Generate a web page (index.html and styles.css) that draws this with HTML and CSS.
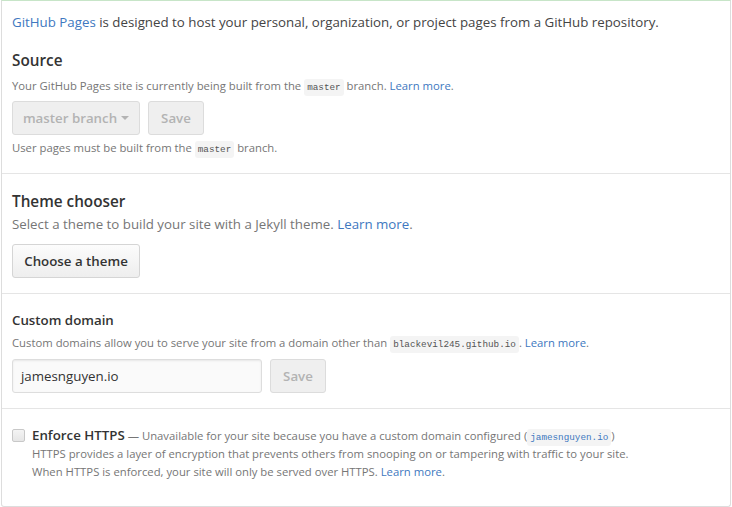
FILE: index.html
```html
<!DOCTYPE html>
<html>
<head>
<meta charset="utf-8">
<link rel="stylesheet" href="styles.css">
</head>
<body>
<div class="box">
  <section class="sec sec-source">
    <p class="intro"><a href="#">GitHub Pages</a> is designed to host your personal, organization, or project pages from a GitHub repository.</p>
    <h3 class="title">Source</h3>
    <p class="note">Your GitHub Pages site is currently being built from the <code>master</code> branch. <a href="#">Learn more</a>.</p>
    <div class="row">
      <button class="btn btn-dis btn-branch">master branch <span class="caret"></span></button>
      <button class="btn btn-dis btn-save">Save</button>
    </div>
    <p class="note note-after">User pages must be built from the <code>master</code> branch.</p>
  </section>
  <section class="sec sec-theme">
    <h3 class="title">Theme chooser</h3>
    <p class="lead">Select a theme to build your site with a Jekyll theme. <a href="#">Learn more</a>.</p>
    <button class="btn btn-theme">Choose a theme</button>
  </section>
  <section class="sec sec-domain">
    <h4 class="subtitle">Custom domain</h4>
    <p class="note">Custom domains allow you to serve your site from a domain other than <code>blackevil245.github.io</code>. <a href="#">Learn more</a>.</p>
    <div class="row row-domain">
      <div class="input">jamesnguyen.io</div>
      <button class="btn btn-dis btn-save">Save</button>
    </div>
  </section>
  <section class="sec sec-https">
    <div class="check-row">
      <span class="checkbox"></span>
      <div class="check-body">
        <p class="line"><strong>Enforce HTTPS</strong> — Unavailable for your site because you have a custom domain configured (<code class="code-link">jamesnguyen.io</code>)</p>
        <p class="line">HTTPS provides a layer of encryption that prevents others from snooping on or tampering with traffic to your site.</p>
        <p class="line">When HTTPS is enforced, your site will only be served over HTTPS. <a href="#">Learn more</a>.</p>
      </div>
    </div>
  </section>
</div>
</body>
</html>
```
FILE: styles.css
```css
* { box-sizing: border-box; }
html, body { margin: 0; padding: 0; background: #fff; }
body {
  font-family: "Segoe UI", "Open Sans", "Liberation Sans", sans-serif;
  color: #333;
  font-size: 13.3px;
}
a { color: #4078c0; text-decoration: none; }
p, h3, h4 { margin: 0; }

.box {
  margin-left: 1px;
  width: 730px;
  height: 507px;
  border: 1px solid #ddd;
  border-top-color: #c7e5c8;
  border-radius: 0 0 3px 3px;
}
.sec { padding: 0 10px; border-top: 1px solid #e5e5e5; }
.sec:first-child { border-top: 0; }

.sec-source { padding-top: 11px; padding-bottom: 16px; }
.sec-theme { padding-top: 15px; padding-bottom: 15px; }
.sec-domain { padding-top: 16px; padding-bottom: 15px; }
.sec-https { padding-top: 17px; }

.intro { font-size: 13.3px; line-height: 20px; color: #444; }
.title { font-size: 15.3px; line-height: 24px; font-weight: 600; color: #333; }
.sec-source .title { margin-top: 16px; }
.subtitle { font-size: 13.3px; line-height: 20px; font-weight: 600; color: #333; }

.note { font-size: 11.3px; line-height: 18px; color: #767676; }
.sec-source .note { margin-top: 5px; }
.sec-source .note-after { margin-top: 4px; }
.sec-domain .note { margin-top: 4px; }

.lead { font-size: 13.3px; line-height: 20px; color: #767676; margin-top: 1px; }

code {
  font-family: Consolas, "Liberation Mono", "DejaVu Sans Mono", monospace;
  font-size: 9.3px;
  line-height: 1;
  background: #f4f4f4;
  padding: 3px 3px;
  border-radius: 3px;
  color: #555;
}
code.code-link { color: #4078c0; }

.row { display: flex; gap: 8px; margin-top: 6px; }
.row-domain { margin-top: 7px; }

.btn {
  font-family: inherit;
  font-size: 13.3px;
  font-weight: 600;
  height: 34px;
  padding: 0 12px;
  border-radius: 3px;
  border: 1px solid #d5d5d5;
  white-space: nowrap;
  display: inline-flex;
  align-items: center;
  justify-content: center;
}
.btn-dis {
  background: #efefef;
  color: #b3b3b3;
  border-color: #dcdcdc;
}
.btn-branch { width: 128px; }
.btn-save { width: 56px; padding: 0; }
.caret {
  display: inline-block;
  width: 0; height: 0;
  margin-left: 4px;
  border-left: 4px solid transparent;
  border-right: 4px solid transparent;
  border-top: 4px solid #b3b3b3;
}
.btn-theme {
  margin-top: 10px;
  width: 128px;
  color: #333;
  background: linear-gradient(#fcfcfc, #eeeeee);
  border-color: #d5d5d5;
}

.input {
  width: 250px;
  height: 34px;
  padding: 0 8px;
  line-height: 32px;
  font-size: 13.3px;
  color: #333;
  background: #fafafa;
  border: 1px solid #ddd;
  border-radius: 3px;
  box-shadow: inset 0 1px 2px rgba(0,0,0,0.075);
}

.check-row { display: flex; align-items: flex-start; gap: 7px; }
.checkbox {
  flex: none;
  width: 13px; height: 13px;
  margin-top: 3px;
  border: 1px solid #c8c8c8;
  border-radius: 2px;
  background: linear-gradient(#f4f4f4, #e6e6e6);
}
.line { font-size: 11.3px; line-height: 18px; color: #767676; }
.line strong { font-size: 13.3px; font-weight: 600; color: #333; }
```
